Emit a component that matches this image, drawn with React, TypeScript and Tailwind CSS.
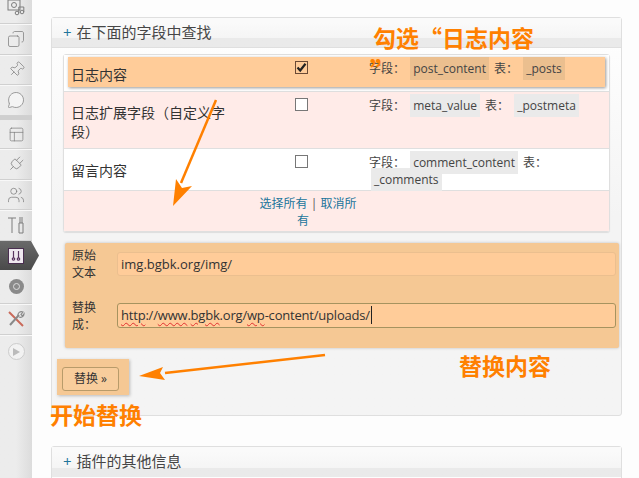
import React from "react";
import { Copy, Pin, MessageCircle, PanelsTopLeft, Plug, Users } from "lucide-react";

const SideItem: React.FC<{ h: string; children?: React.ReactNode }> = ({ h, children }) => (
  <div className={`${h} flex items-center justify-center border-b border-[#d0d0d0] shadow-[0_1px_0_#f8f8f8] text-[#7d7d7d]`}>
    {children}
  </div>
);

const Chip: React.FC<{ children: React.ReactNode; tint?: boolean }> = ({ children, tint }) => (
  <code className={`${tint ? "bg-[#ebbf8f]" : "bg-[#eaeaea]"} px-[3px] py-[3px] mx-[2px] font-['Open_Sans','Noto_Sans_CJK_SC',sans-serif] text-[12px]`}>
    {children}
  </code>
);

const Squiggle: React.FC<{ children: React.ReactNode }> = ({ children }) => (
  <span className="underline decoration-wavy decoration-[#e03030] decoration-1 underline-offset-2">{children}</span>
);

const Row: React.FC<{ label: string; checked?: boolean; pink?: boolean; h: string; pt: string; hl?: boolean; children: React.ReactNode }> = ({
  label,
  checked,
  pink,
  h,
  pt,
  hl,
  children,
}) => (
  <div className={`${h} ${pink ? "bg-[#ffebe8]" : "bg-white"} relative grid grid-cols-[177px_120px_1fr] border-b border-[#dfdfdf]`}>
    {hl && <div className="absolute left-[4px] right-[4px] top-[2px] h-[30px] bg-[#ffcc99] shadow-[1px_1px_3px_#999]" />}
    <div className={`relative pl-[7px] pr-[9px] ${pt} text-[14px] leading-[19px] text-[#333]`}>{label}</div>
    <div className="relative flex justify-center pt-[6px]">
      <span className={`w-[13px] h-[13px] border ${checked ? "border-[#6b4a35]" : "border-[#777] bg-white"} flex items-center justify-center`}>
        {checked && (
          <svg width="11" height="11" viewBox="0 0 11 11">
            <path d="M1.5 5.5 L4.2 8.5 L9.5 1.8" fill="none" stroke="#222" strokeWidth="2.2" />
          </svg>
        )}
      </span>
    </div>
    <div className="relative pl-2 pr-2 pt-[5px] text-[12px] leading-[17px] text-[#444]">{children}</div>
  </div>
);

export default function App() {
  return (
    <div className="relative h-[478px] w-[639px] overflow-hidden bg-[#fdfdfd] flex font-['Open_Sans','Noto_Sans_CJK_SC',sans-serif]">
      <aside className="w-[32px] shrink-0 bg-[#ececec] bg-gradient-to-r from-[#ececec] via-[#ececec] to-[#dcdcdc] flex flex-col">
        <SideItem h="h-[24px]">
          <svg width="20" height="20" viewBox="0 0 20 20" fill="none" stroke="#7d7d7d" strokeWidth="1" className="-mt-[8px]">
            <rect x="2" y="2" width="12" height="10" />
            <circle cx="8" cy="7" r="2.5" />
            <circle cx="11" cy="15" r="1.8" />
            <circle cx="16" cy="14" r="1.8" />
            <path d="M12.8 15V9h5v5" />
          </svg>
        </SideItem>
        <SideItem h="h-[31px]"><Copy size={18} strokeWidth={1} className="-scale-x-100" /></SideItem>
        <SideItem h="h-[30px]"><Pin size={17} strokeWidth={1} className="rotate-45" /></SideItem>
        <SideItem h="h-[31px]"><MessageCircle size={18} strokeWidth={1} fill="#f4f4f4" /></SideItem>
        <div className="h-[4px] bg-[#cfcfcf]" />
        <SideItem h="h-[29px]"><PanelsTopLeft size={17} strokeWidth={1} /></SideItem>
        <SideItem h="h-[31px]"><Plug size={18} strokeWidth={1} className="rotate-45" /></SideItem>
        <SideItem h="h-[30px]"><Users size={18} strokeWidth={1} /></SideItem>
        <SideItem h="h-[31px]">
          <svg width="18" height="20" viewBox="0 0 18 20" fill="none" stroke="#7d7d7d" strokeWidth="1">
            <path d="M1 3h8M5 3v15" />
            <path d="M13 2v6M15 2v6M12 8h4v10h-4z" />
          </svg>
        </SideItem>
        <div className="h-[29px] w-[39px] bg-gradient-to-b from-[#6a6a6a] to-[#4a4a4a] [clip-path:polygon(0_0,31px_0,39px_50%,31px_100%,0_100%)] pr-[7px] flex items-center justify-center">
          <span className="w-[16px] h-[16px] bg-[#efe8ef] border border-[#4a2f50] flex items-center justify-center">
            <svg width="12" height="12" viewBox="0 0 12 12" fill="none" stroke="#5a3560" strokeWidth="1.2">
              <path d="M3.5 1v7M8.500 1v7" />
              <circle cx="3.5" cy="9" r="1.200" />
              <circle cx="8.500" cy="9" r="1.200" />
            </svg>
          </span>
        </div>
        <SideItem h="h-[34px]">
          <span className="w-[15px] h-[15px] rounded-full bg-[#8a8a8a] flex items-center justify-center">
            <span className="w-[7px] h-[7px] rounded-full border border-[#ddd]" />
          </span>
        </SideItem>
        <SideItem h="h-[31px]">
          <svg width="18" height="18" viewBox="0 0 18 18" fill="none" strokeWidth="2">
            <path d="M2 2 L16 16" stroke="#c96a5a" />
            <path d="M3 15 L12 5" stroke="#8a8a8a" />
            <path d="M11 6 A3.500 3.500 0 0 1 16 2 L14 4.500 L15.500 6 L17 4 A3.500 3.500 0 0 1 12 7" stroke="#8a8a8a" strokeWidth="1.2" />
          </svg>
        </SideItem>
        <div className="flex justify-center pt-[8px]">
          <span className="w-[17px] h-[17px] rounded-full border border-[#ccc] bg-[#f2f2f2] flex items-center justify-center">
            <span className="border-y-[4px] border-l-[7px] border-y-transparent border-l-[#bbb] ml-[1px]" />
          </span>
        </div>
      </aside>

      <main className="w-[571px] ml-[19px] pt-[17px] shrink-0">
        <section className="h-[399px] rounded-[3px] border border-[#dfdfdf] bg-gradient-to-b from-white to-[#f4f4f4] to-50% flex flex-col">
          <h3 className="h-[30px] shrink-0 pl-[11px] pt-[4px] text-[15px] leading-[20px] font-normal text-[#464646] bg-gradient-to-b from-[#fafafa] from-15% via-[#f5f5f5] via-70% to-[#eaeaea] to-70% border-b border-[#dfdfdf]">
            <span className="text-[#21759b] mr-[5px]">+</span>在下面的字段中查找
          </h3>

          <div className="mx-[11px] mt-[6px] border border-[#dfdfdf] rounded-[3px] shadow-[0_1px_1px_#ddd]">
            <Row label="日志内容" checked h="h-[37px]" pt="pt-[10px]" hl>
              <span>字段：</span> <Chip tint>post_content</Chip> 表： <Chip tint>_posts</Chip>
            </Row>
            <Row label="日志扩展字段（自定义字段）" pink h="h-[57px]" pt="pt-[11px]">
              <span>字段：</span> <Chip>meta_value</Chip> 表： <Chip>_postmeta</Chip>
            </Row>
            <Row label="留言内容" h="h-[42px]" pt="pt-[12px]">
              <span>字段：</span> <Chip>comment_content</Chip> 表： <Chip>_comments</Chip>
            </Row>
            <div className="h-[40px] bg-[#ffebe8] grid grid-cols-[177px_120px_1fr]">
              <div className="pl-[8px] pr-[4px] pt-[4px] text-center text-[12px] leading-[17px] text-[#21759b] col-start-2">
                <span className="ml-[10px]">选择所有</span> <span className="text-[#555]">|</span> 取消所有
              </div>
            </div>
          </div>

          <div className="ml-[13px] mt-[11px] w-[554px] h-[105px] bg-[#f5c894] rounded-[2px] shadow-[0_0_3px_#bbb] grid grid-cols-[52px_1fr] content-start pl-[7px] pr-[3px] pt-[3px]">
            <div className="text-[12px] leading-[17px] text-[#333] pt-[1px]">原始<br />文本</div>
            <div className="h-[24px] mt-[6px] -ml-[7px] rounded-[3px] border border-[#ebbf8f] bg-[#ffcc99] pl-[3px] text-[13px] leading-[22px] text-[#333]">
              img.bgbk.org/img/
            </div>
            <div className="text-[12px] leading-[17px] text-[#333] mt-[18px]">替换<br />成：</div>
            <div className="h-[25px] mt-[22px] -ml-[7px] rounded-[3px] border border-[#a6935f] bg-[#ffcc99] pl-[3px] text-[13px] leading-[23px] tracking-[-0.2px] text-[#333]">
              <Squiggle>http</Squiggle>://<Squiggle>www</Squiggle>.<Squiggle>bgbk</Squiggle>.org/<Squiggle>wp</Squiggle>-content/uploads/
              <span className="border-r border-[#222] ml-[1px]" />
            </div>
          </div>

          <div className="ml-[5px] mt-[11px] w-[72px] h-[36px] bg-[#f5c894] shadow-[1px_1px_3px_#bbb] pl-[5px] pt-[6px]">
            <button className="w-[57px] h-[24px] rounded-[3px] border border-[#b89b6a] bg-[#f8cd9c] text-[12px] text-[#333]">替换 »</button>
          </div>
        </section>

        <section className="mt-[30px] h-[50px] rounded-[3px] border border-[#dfdfdf]">
          <h3 className="h-[30px] pl-[11px] pt-[4px] text-[15px] leading-[20px] font-normal text-[#464646] bg-gradient-to-b from-[#fafafa] from-15% via-[#f5f5f5] via-70% to-[#eaeaea] to-70%">
            <span className="text-[#21759b] mr-[5px]">+</span>插件的其他信息
          </h3>
        </section>
      </main>

      {/* annotations drawn over the screenshot */}
      <svg width="639" height="478" className="absolute left-0 top-0 pointer-events-none">
        <path d="M216 100 L181 183" stroke="#ff8000" strokeWidth="2.5" fill="none" />
        <path d="M173 206 L176 179 L182 188 L192 186 Z" fill="#ff8000" />
        <path d="M325 355 L165 373" stroke="#ff8000" strokeWidth="2.5" fill="none" />
        <path d="M139 376 L163 367 L160 373 L165 380 Z" fill="#ff8000" />
      </svg>
      <div className="absolute left-[373px] top-[21px] text-[23px] leading-[32px] font-bold text-[#ff8000] font-['Noto_Sans_CJK_SC',sans-serif]">勾选“日志内容</div>
      <div className="absolute left-[370px] top-[57px] text-[26px] leading-[28px] font-black text-[#ff8000] font-['Noto_Sans_CJK_SC',sans-serif]">”</div>
      <div className="absolute left-[459px] top-[349px] text-[23px] leading-[32px] font-bold text-[#ff8000] font-['Noto_Sans_CJK_SC',sans-serif]">替换内容</div>
      <div className="absolute left-[50px] top-[398px] text-[23px] leading-[32px] font-bold text-[#ff8000] font-['Noto_Sans_CJK_SC',sans-serif]">开始替换</div>
    </div>
  );
}
